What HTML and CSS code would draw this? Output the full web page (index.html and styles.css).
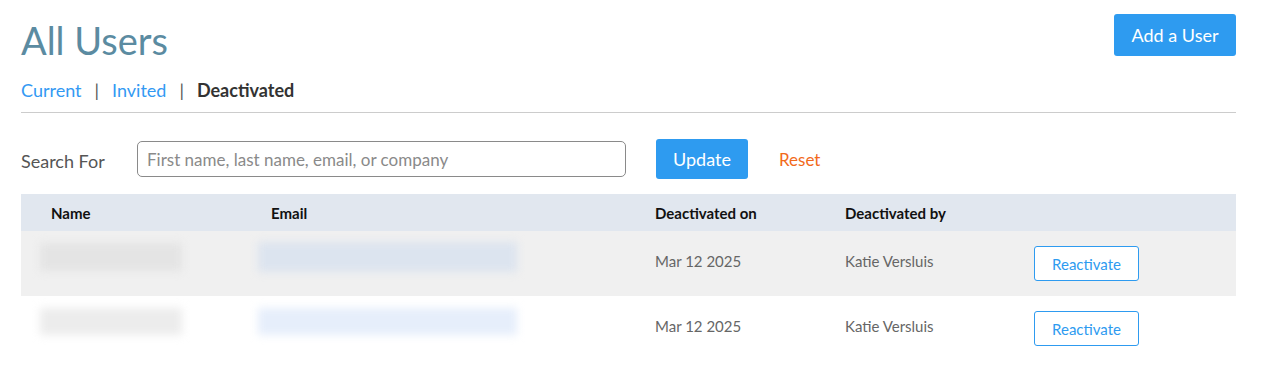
FILE: index.html
```html
<!DOCTYPE html>
<html lang="en">

<head>
    <meta charset="UTF-8">
    <meta name="viewport" content="width=device-width, initial-scale=1.0">
    <title>All Users</title>
    <link rel="stylesheet" href="styles.css">
</head>

<body>
    <div class="page">
        <div class="page-header">
            <h1>All Users</h1>
            <button class="btn btn-primary btn-add">Add a User</button>
        </div>

        <div class="tabs">
            <a href="#" class="tab">Current</a>
            <span class="sep">|</span>
            <a href="#" class="tab">Invited</a>
            <span class="sep">|</span>
            <span class="tab active">Deactivated</span>
        </div>

        <div class="search-row">
            <label class="search-label" for="search">Search For</label>
            <input id="search" class="search-input" type="text" placeholder="First name, last name, email, or company">
            <button class="btn btn-primary btn-update">Update</button>
            <a href="#" class="reset">Reset</a>
        </div>

        <div class="table">
            <div class="row head">
                <div class="cell name-head">Name</div>
                <div class="cell">Email</div>
                <div class="cell">Deactivated on</div>
                <div class="cell">Deactivated by</div>
                <div class="cell"></div>
            </div>
            <div class="row odd">
                <div class="cell"><div class="blur blur-name"></div></div>
                <div class="cell"><div class="blur blur-email"></div></div>
                <div class="cell text">Mar 12 2025</div>
                <div class="cell text">Katie Versluis</div>
                <div class="cell"><button class="btn btn-outline">Reactivate</button></div>
            </div>
            <div class="row">
                <div class="cell"><div class="blur blur-name light"></div></div>
                <div class="cell"><div class="blur blur-email light"></div></div>
                <div class="cell text">Mar 12 2025</div>
                <div class="cell text">Katie Versluis</div>
                <div class="cell"><button class="btn btn-outline">Reactivate</button></div>
            </div>
        </div>
    </div>
</body>

</html>
```

FILE: styles.css
```css
body {
    margin: 0;
    background-color: #ffffff;
    font-family: 'Lato', 'Open Sans', sans-serif;
    color: #555555;
}

.page {
    padding: 14px 36px 0 21px;
}

.page-header {
    display: flex;
    justify-content: space-between;
    align-items: flex-start;
}

h1 {
    margin: 6px 0 0 0;
    font-size: 38px;
    font-weight: 400;
    line-height: 40px;
    color: #5b8ba1;
}

.btn {
    font-family: inherit;
    border: none;
    border-radius: 3px;
    cursor: pointer;
}

.btn-primary {
    background-color: #2e9bf0;
    color: #ffffff;
}

.btn-add {
    width: 122px;
    height: 42px;
    font-size: 18px;
}

.tabs {
    display: flex;
    align-items: center;
    margin-top: 19px;
    padding-bottom: 11px;
    border-bottom: 1px solid #cccccc;
    font-size: 18px;
    line-height: 22px;
}

.tab {
    color: #3399f3;
    text-decoration: none;
}

.tab.active {
    color: #333333;
    font-weight: bold;
}

.sep {
    color: #555555;
    margin: 0 13px;
}

.search-row {
    display: flex;
    align-items: center;
    margin-top: 26px;
}

.search-label {
    width: 116px;
    font-size: 18px;
    color: #555555;
    padding-top: 4px;
}

.search-input {
    box-sizing: border-box;
    width: 489px;
    height: 36px;
    border: 1px solid #8a8a8a;
    border-radius: 5px;
    padding: 0 9px;
    font-family: inherit;
    font-size: 17px;
    color: #555555;
}

.search-input::placeholder {
    color: #8a8a8a;
}

.btn-update {
    margin-left: 30px;
    width: 92px;
    height: 40px;
    font-size: 18px;
}

.reset {
    margin-left: 31px;
    color: #f26a1b;
    text-decoration: none;
    font-size: 17px;
}

.table {
    margin-top: 15px;
}

.row {
    display: grid;
    grid-template-columns: 231px 384px 190px 189px 1fr;
    align-items: center;
    height: 65px;
    font-size: 15px;
    color: #666666;
}

.row.head {
    height: 37px;
    background-color: #e1e7ef;
    color: #111111;
    font-weight: bold;
}

.row.odd {
    background-color: #f0f0f0;
}

.cell {
    padding-left: 19px;
}

.cell.text {
    margin-bottom: 6px;
}

.name-head {
    padding-left: 30px;
}

.blur {
    filter: blur(4px);
    margin-bottom: 14px;
}

.blur-name {
    width: 142px;
    height: 28px;
    background-color: #e4e4e4;
}

.blur-email {
    margin-left: -13px;
    width: 259px;
    height: 30px;
    background-color: #dce4ef;
}

.blur-name.light {
    height: 27px;
    background-color: #ececec;
}

.blur-email.light {
    height: 27px;
    background-color: #e6eefb;
}

.btn-outline {
    width: 105px;
    height: 35px;
    background-color: #ffffff;
    border: 1px solid #2e9bf0;
    color: #2e9bf0;
    font-size: 15px;
}
```
